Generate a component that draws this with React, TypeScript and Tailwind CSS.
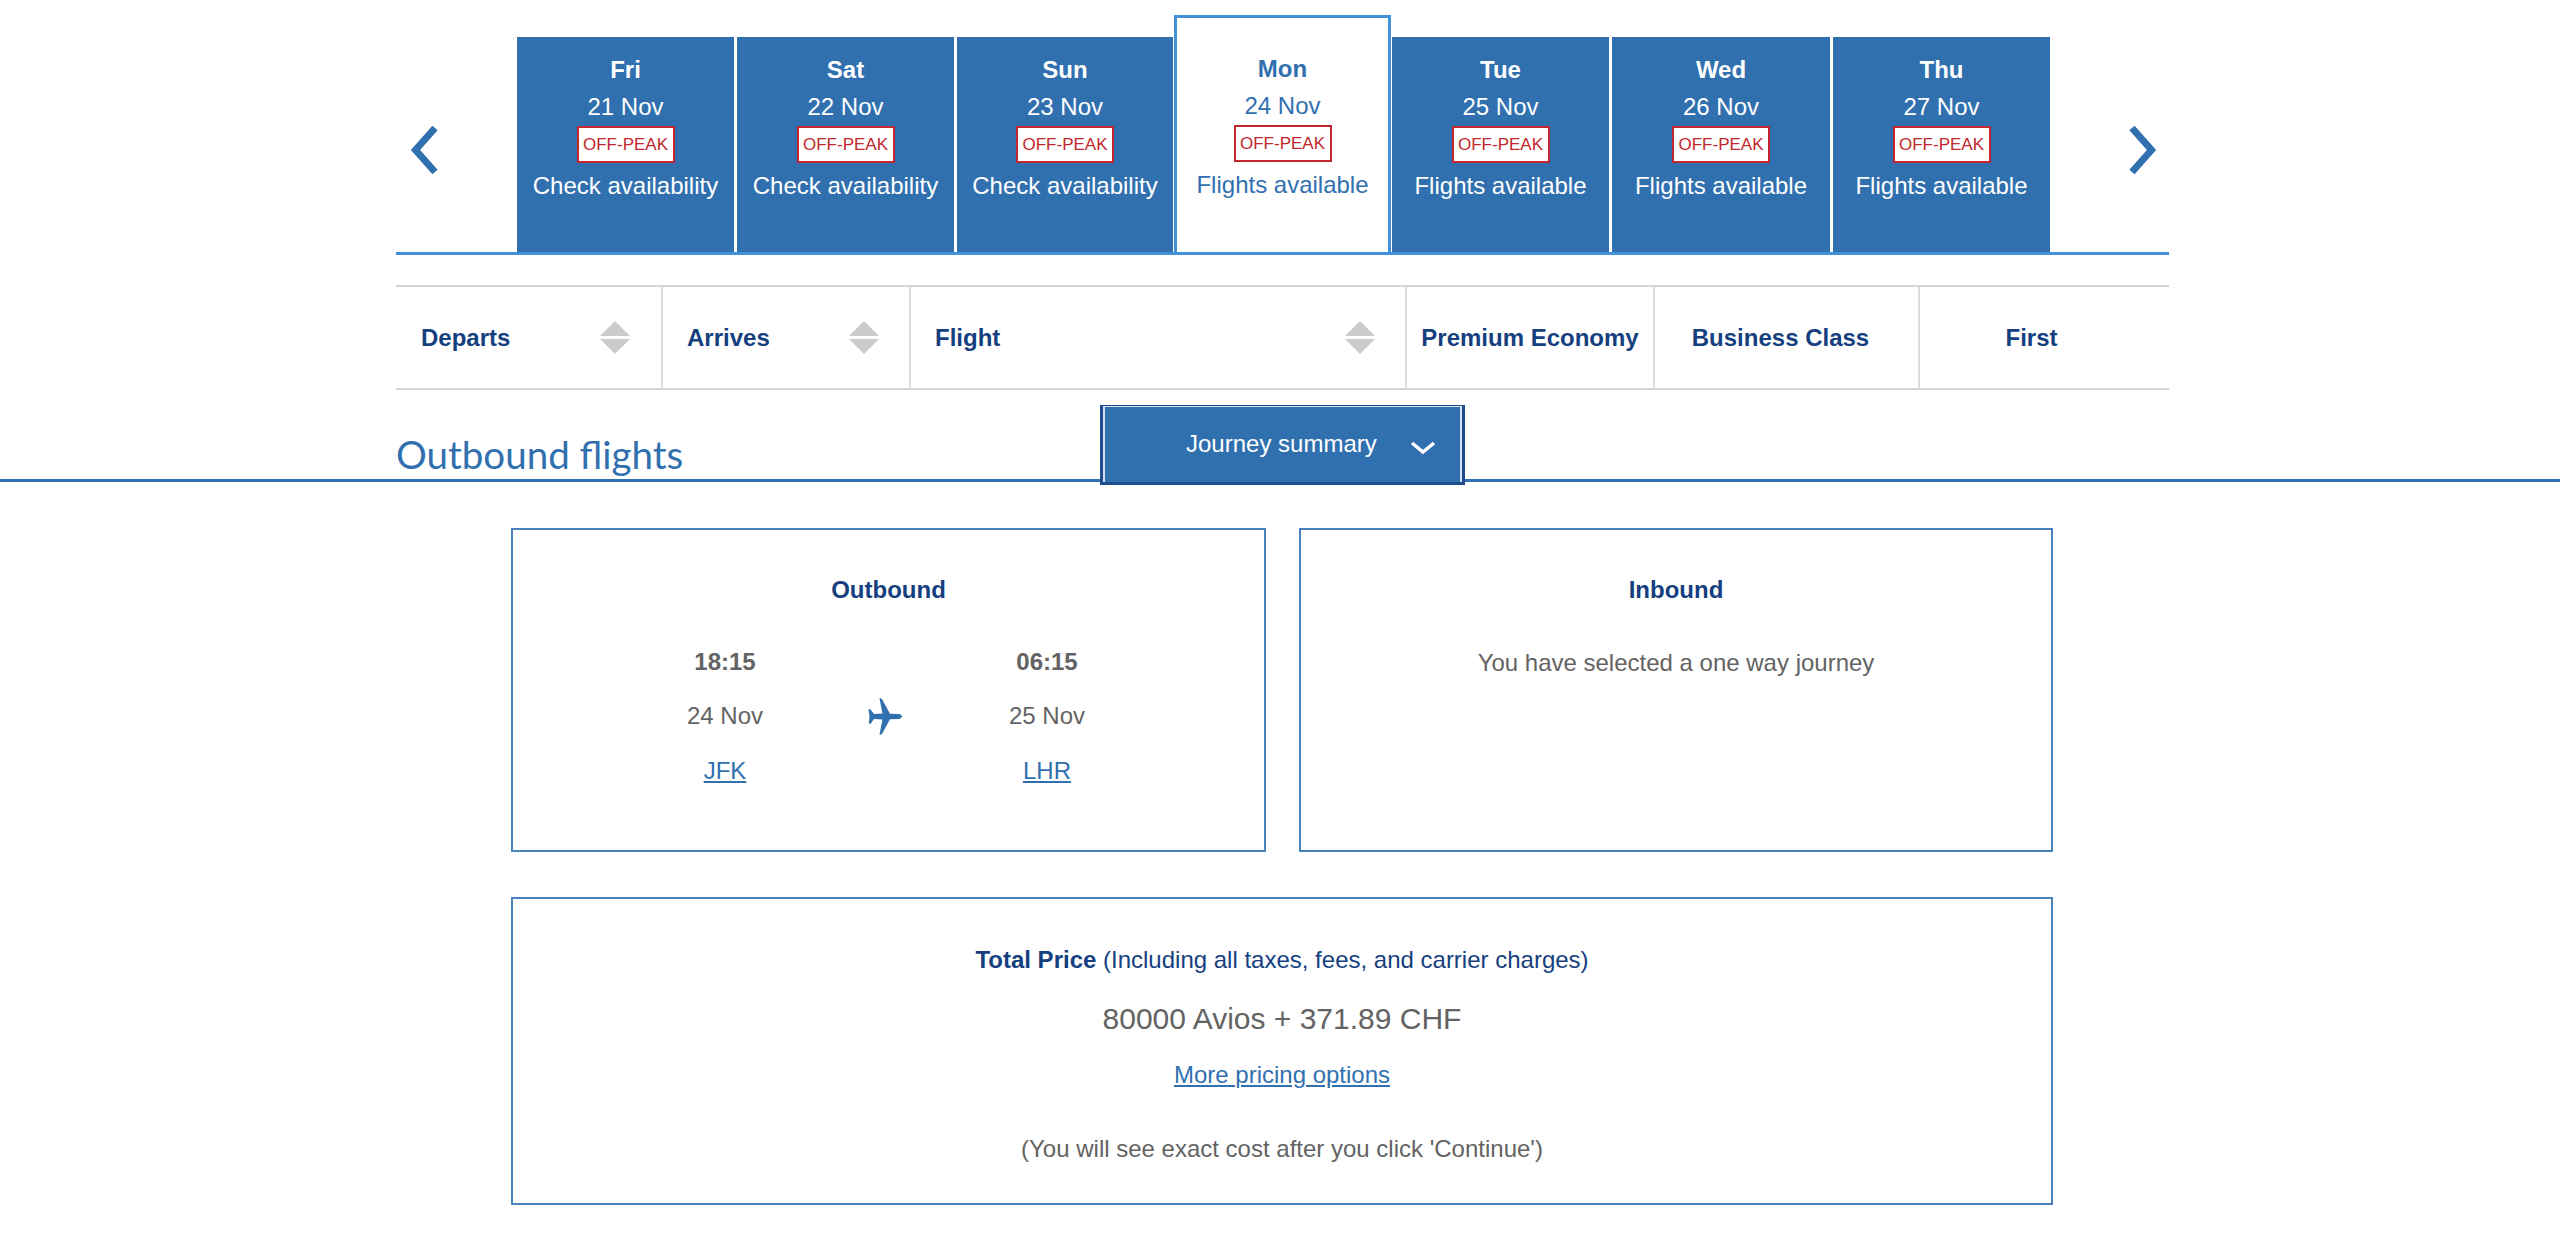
const font = { fontFamily: '"Liberation Sans", Arial, sans-serif' };

type Tab = { day: string; date: string; status: string; width: string; badge: string };

const tabs: Tab[] = [
  { day: "Fri", date: "21 Nov", status: "Check availability", width: "w-[217px]", badge: "w-[98px]" },
  { day: "Sat", date: "22 Nov", status: "Check availability", width: "w-[217px]", badge: "w-[98px]" },
  { day: "Sun", date: "23 Nov", status: "Check availability", width: "w-[216px]", badge: "w-[98px]" },
  { day: "Mon", date: "24 Nov", status: "Flights available", width: "w-[217px]", badge: "w-[98px]" },
  { day: "Tue", date: "25 Nov", status: "Flights available", width: "w-[217px]", badge: "w-[98px]" },
  { day: "Wed", date: "26 Nov", status: "Flights available", width: "w-[218px]", badge: "w-[98px]" },
  { day: "Thu", date: "27 Nov", status: "Flights available", width: "w-[217px]", badge: "w-[98px]" },
];

function Badge({ width }: { width: string }) {
  return (
    <div className={`${width} h-[37px] mx-auto bg-white border-2 border-[#c1272d] text-[#c1272d] text-[17px] leading-[34px] text-center whitespace-nowrap`}>
      OFF-PEAK
    </div>
  );
}

function DayTab({ tab }: { tab: Tab }) {
  const selected = tab.day === "Mon";
  if (selected) {
    return (
      <div className={`${tab.width} h-[237px] shrink-0 bg-white border-x-[3px] border-t-[3px] border-[#4190d8] pt-[32px] text-center text-[#3170af] text-[24px] leading-[37px]`}>
        <div className="font-bold">{tab.day}</div>
        <div>{tab.date}</div>
        <div className="mt-px"><Badge width={tab.badge} /></div>
        <div className="mt-[4px] whitespace-nowrap">{tab.status}</div>
      </div>
    );
  }
  return (
    <div className={`${tab.width} h-[215px] shrink-0 bg-[#3170af] pt-[14px] text-center text-white text-[24px] leading-[37px]`}>
      <div className="font-bold">{tab.day}</div>
      <div>{tab.date}</div>
      <div className="mt-px"><Badge width={tab.badge} /></div>
      <div className="mt-[4px] whitespace-nowrap">{tab.status}</div>
    </div>
  );
}

function SortArrows() {
  return (
    <svg width="30" height="33" viewBox="0 0 30 33" className="shrink-0">
      <path d="M15 0 L30 15 L0 15 Z" fill="#cbcbcb" />
      <path d="M0 18 L30 18 L15 33 Z" fill="#cbcbcb" />
    </svg>
  );
}

function Plane() {
  return (
    <svg width="34" height="37" viewBox="0 0 34 37" className="shrink-0 -ml-[2px]">
      <path
        d="M11.5 0.5 C12.5 0 13.5 0.3 14.2 1.4 L22 15.8 L30.5 16 C32.8 16.2 34 17.4 34 18.5 C34 19.6 32.8 20.8 30.5 21 L22 21.2 L14.2 35.6 C13.5 36.7 12.5 37 11.5 36.5 L14.5 21.4 L6 21 L2.6 25.8 L0.8 25.6 L1.6 18.5 L0.4 11.4 L2.4 11.2 L6 16 L14.5 15.6 Z"
        fill="#3170af"
      />
    </svg>
  );
}

function Col({ time, date, code }: { time: string; date: string; code: string }) {
  return (
    <div className="text-center text-[24px] leading-[54px] text-[#636363]">
      <div className="font-bold">{time}</div>
      <div>{date}</div>
      <div className="mt-px"><a className="text-[#3170af] underline">{code}</a></div>
    </div>
  );
}

export default function App() {
  return (
    <div className="w-full min-h-[1234px] bg-white" style={font}>
      <div className="ml-[396px] w-[1773px]">
        <div className="flex items-end h-[255px] border-b-[3px] border-[#4190d8]">
          <div className="w-[121px] h-[215px] shrink-0 pl-[14px] pt-[87px]">
            <svg width="28" height="52" viewBox="0 0 28 52">
              <polyline points="25,4 5.5,26 25,48" fill="none" stroke="#3170af" strokeWidth="7" />
            </svg>
          </div>
          <div className="flex items-end">
            {tabs.map((t, i) => (
              <div key={t.day} className={i === 0 ? "" : i === 3 || i === 4 ? "ml-[1px]" : "ml-[3px]"}>
                <DayTab tab={t} />
              </div>
            ))}
          </div>
          <div className="h-[215px] pl-[79px] pt-[87px]">
            <svg width="28" height="52" viewBox="0 0 28 52">
              <polyline points="3,4 22.5,26 3,48" fill="none" stroke="#3170af" strokeWidth="7" />
            </svg>
          </div>
        </div>

        <div className="mt-[30px] flex h-[105px] border-y-2 border-[#d4d4d4] text-[24px] font-bold text-[#153f7f]">
          <div className="w-[267px] flex items-center justify-between pl-[25px] pr-[31px] border-r-2 border-[#dcdcdc]">
            <span>Departs</span>
            <SortArrows />
          </div>
          <div className="w-[248px] flex items-center justify-between pl-[24px] pr-[30px] border-r-2 border-[#dcdcdc]">
            <span>Arrives</span>
            <SortArrows />
          </div>
          <div className="w-[496px] flex items-center justify-between pl-[24px] pr-[30px] border-r-2 border-[#dcdcdc]">
            <span>Flight</span>
            <SortArrows />
          </div>
          <div className="w-[248px] flex items-center justify-center border-r-2 border-[#dcdcdc] whitespace-nowrap">Premium Economy</div>
          <div className="w-[265px] flex items-center justify-center pr-[12px] border-r-2 border-[#dcdcdc] whitespace-nowrap">Business Class</div>
          <div className="w-[249px] flex items-center justify-center pr-[26px]">First</div>
        </div>
      </div>

      <div className="h-[92px] border-b-[3px] border-[#3170af] pl-[396px] flex items-start">
        <div className="w-[704px] pt-[38px] text-[38.5px] leading-[52px] text-[#3170af]" style={{ fontFamily: 'Lato, sans-serif' }}>
          Outbound flights
        </div>
        <div className="relative mt-[15px] w-[365px] h-[80px] shrink-0 bg-[#3170af] border-l-[3px] border-r-[3px] border-b-[3px] border-t border-[#1f4d8f] text-white text-[24px]">
          <div className="h-full border-l-2 border-r-2 border-t border-white/80 flex items-start pl-[81px] pt-[18px] leading-[37px]">
            <span className="whitespace-nowrap">Journey summary</span>
            <svg width="26" height="14" viewBox="0 0 26 14" className="ml-[33px] mt-[16px]">
              <polyline points="2,2 13,11 24,2" fill="none" stroke="#ffffff" strokeWidth="3.5" />
            </svg>
          </div>
        </div>
      </div>

      <div className="ml-[511px] w-[1542px] pt-[46px]">
        <div className="flex gap-[33px]">
          <div className="w-[755px] h-[324px] border-2 border-[#4a82bb]">
            <div className="pt-[41px] text-center text-[24px] leading-[37px] font-bold text-[#153f7f]">Outbound</div>
            <div className="mt-[27px] pl-[112px] grid grid-cols-[200px_122px_200px] items-center">
              <Col time="18:15" date="24 Nov" code="JFK" />
              <div className="flex justify-center"><Plane /></div>
              <Col time="06:15" date="25 Nov" code="LHR" />
            </div>
          </div>
          <div className="w-[754px] h-[324px] border-2 border-[#4a82bb] text-center">
            <div className="pt-[41px] text-[24px] leading-[37px] font-bold text-[#153f7f]">Inbound</div>
            <div className="mt-[28px] text-[24px] leading-[54px] text-[#636363]">You have selected a one way journey</div>
          </div>
        </div>

        <div className="mt-[45px] h-[308px] border-2 border-[#4a82bb] text-center text-[24px]">
          <div className="pt-[42px] leading-[37px] text-[#153f7f]">
            <span className="font-bold">Total Price</span> (Including all taxes, fees, and carrier charges)
          </div>
          <div className="mt-[19px] text-[30px] leading-[44px] text-[#636363]">80000 Avios + 371.89 CHF</div>
          <div className="mt-[15px] leading-[37px]"><a className="text-[#3170af] underline">More pricing options</a></div>
          <div className="mt-[37px] leading-[37px] text-[#636363]">(You will see exact cost after you click 'Continue')</div>
        </div>
      </div>
    </div>
  );
}
